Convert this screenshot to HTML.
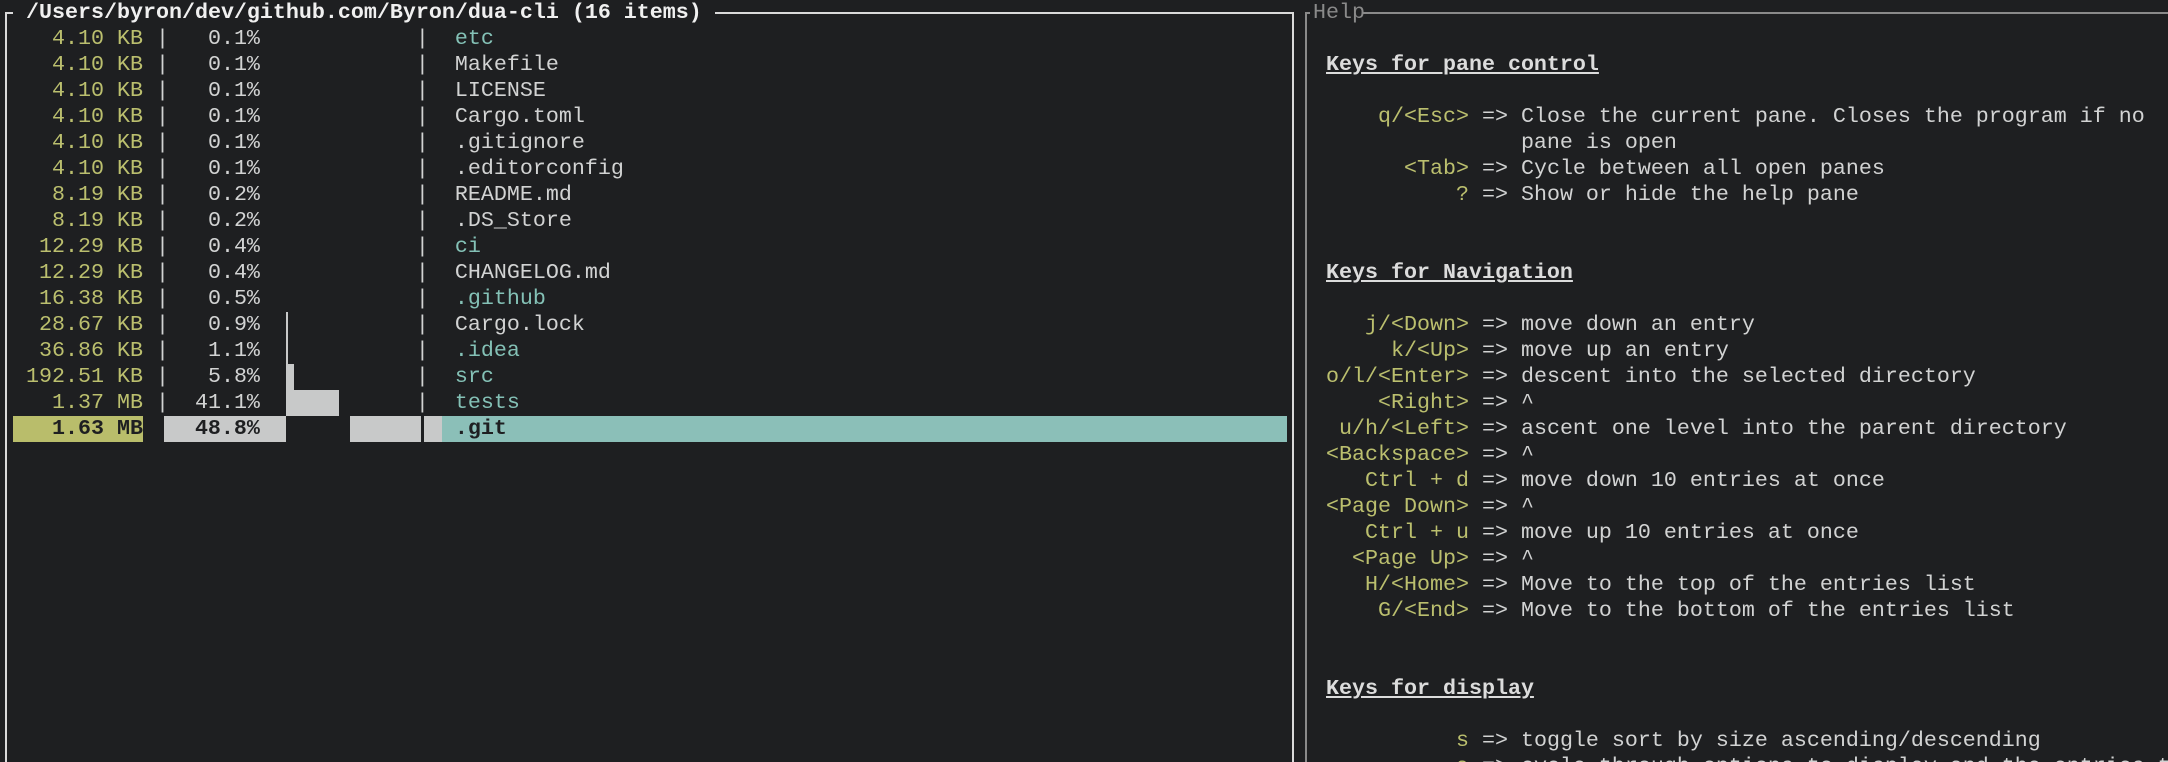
<!DOCTYPE html>
<html><head><meta charset="utf-8">
<style>
html,body{margin:0;padding:0;background:#1e1f21;width:2168px;height:762px;overflow:hidden;position:relative}
pre{margin:0;position:absolute;font-family:"Liberation Mono",monospace;font-size:21.67px;line-height:26px;color:#d2d3d3;white-space:pre}
.b{position:absolute}
.y{color:#bbbf6e}
.t{color:#84c1b6}
.h{font-weight:bold;text-decoration:underline;color:#dcdcdc}
.dk{color:#1e1f21;font-weight:bold}
</style></head><body>
<div class="b" style="left:5px;top:12px;width:1289px;height:2px;background:#dadada"></div>
<div class="b" style="left:5px;top:12px;width:2px;height:760px;background:#dadada"></div>
<div class="b" style="left:1292px;top:12px;width:2px;height:760px;background:#dadada"></div>
<div class="b" style="left:13px;top:0;width:702px;height:26px;background:#1e1f21"></div>
<div class="b" style="left:1305px;top:12px;width:863px;height:2px;background:#8a8a8a"></div>
<div class="b" style="left:1305px;top:12px;width:2px;height:760px;background:#8a8a8a"></div>
<div class="b" style="left:1310px;top:0;width:52px;height:26px;background:#1e1f21"></div>
<div class="b" style="left:286px;top:312px;width:2px;height:52px;background:#c8c9c9"></div>
<div class="b" style="left:286px;top:364px;width:8px;height:26px;background:#c8c9c9"></div>
<div class="b" style="left:286px;top:390px;width:53px;height:26px;background:#c8c9c9"></div>
<div class="b" style="left:13px;top:416px;width:130px;height:26px;background:#b9bd6b"></div>
<div class="b" style="left:164px;top:416px;width:122px;height:26px;background:#c8c9c9"></div>
<div class="b" style="left:350px;top:416px;width:92px;height:26px;background:#c8c9c9"></div>
<div class="b" style="left:421px;top:416px;width:3px;height:26px;background:#1e1f21"></div>
<div class="b" style="left:442px;top:416px;width:845px;height:26px;background:#8bbfb8"></div>
<div class="b" style="left:160px;top:420px;width:3px;height:18px;background:#1e1f21"></div>

<pre style="left:0;top:0">
  <b style="color:#f0f0f0">/Users/byron/dev/github.com/Byron/dua-cli (16 items)</b>
<span class="y">    4.10 KB</span> |   0.1%            |  <span class="t">etc</span>
<span class="y">    4.10 KB</span> |   0.1%            |  Makefile
<span class="y">    4.10 KB</span> |   0.1%            |  LICENSE
<span class="y">    4.10 KB</span> |   0.1%            |  Cargo.toml
<span class="y">    4.10 KB</span> |   0.1%            |  .gitignore
<span class="y">    4.10 KB</span> |   0.1%            |  .editorconfig
<span class="y">    8.19 KB</span> |   0.2%            |  README.md
<span class="y">    8.19 KB</span> |   0.2%            |  .DS_Store
<span class="y">   12.29 KB</span> |   0.4%            |  <span class="t">ci</span>
<span class="y">   12.29 KB</span> |   0.4%            |  CHANGELOG.md
<span class="y">   16.38 KB</span> |   0.5%            |  <span class="t">.github</span>
<span class="y">   28.67 KB</span> |   0.9%            |  Cargo.lock
<span class="y">   36.86 KB</span> |   1.1%            |  <span class="t">.idea</span>
<span class="y">  192.51 KB</span> |   5.8%            |  <span class="t">src</span>
<span class="y">    1.37 MB</span> |  41.1%            |  <span class="t">tests</span>
<span class="dk">    1.63 MB    48.8%               .git</span></pre>

<pre style="left:1313px;top:0;color:#8a8a8a">Help</pre>

<pre style="left:1326px;top:0">


<span class="h">Keys for pane control</span>

<span class="y">    q/&lt;Esc&gt;</span> =&gt; Close the current pane. Closes the program if no
               pane is open
<span class="y">      &lt;Tab&gt;</span> =&gt; Cycle between all open panes
<span class="y">          ?</span> =&gt; Show or hide the help pane


<span class="h">Keys for Navigation</span>

<span class="y">   j/&lt;Down&gt;</span> =&gt; move down an entry
<span class="y">     k/&lt;Up&gt;</span> =&gt; move up an entry
<span class="y">o/l/&lt;Enter&gt;</span> =&gt; descent into the selected directory
<span class="y">    &lt;Right&gt;</span> =&gt; ^
<span class="y"> u/h/&lt;Left&gt;</span> =&gt; ascent one level into the parent directory
<span class="y">&lt;Backspace&gt;</span> =&gt; ^
<span class="y">   Ctrl + d</span> =&gt; move down 10 entries at once
<span class="y">&lt;Page Down&gt;</span> =&gt; ^
<span class="y">   Ctrl + u</span> =&gt; move up 10 entries at once
<span class="y">  &lt;Page Up&gt;</span> =&gt; ^
<span class="y">   H/&lt;Home&gt;</span> =&gt; Move to the top of the entries list
<span class="y">    G/&lt;End&gt;</span> =&gt; Move to the bottom of the entries list


<span class="h">Keys for display</span>

<span class="y">          s</span> =&gt; toggle sort by size ascending/descending
<span class="y">          a</span> =&gt; cycle through options to display and the entries time</pre>
</body></html>
